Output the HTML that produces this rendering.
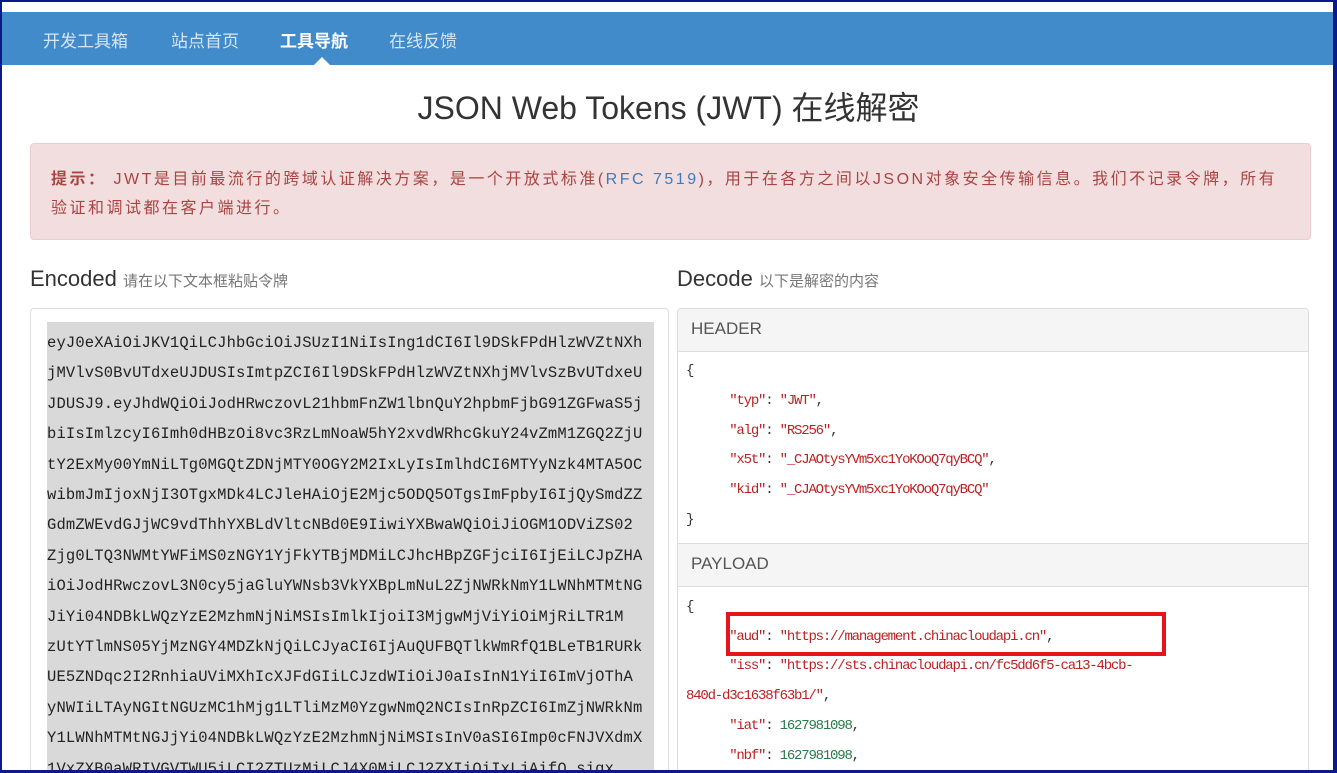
<!DOCTYPE html>
<html><head><meta charset="utf-8"><style>
*{margin:0;padding:0;box-sizing:border-box}
html,body{width:1337px;height:773px;overflow:hidden}
body{background:#fff;font-family:"Liberation Sans","Noto Sans CJK SC",sans-serif;position:relative}
.frame{position:absolute;left:0;top:0;width:1337px;height:773px;border:2px solid #0a1a8a;border-right-width:4px;border-bottom-width:3px;pointer-events:none;z-index:10}
.nav{position:absolute;left:2px;right:4px;top:12px;height:53px;background:#428bca}
.nav span{position:absolute;top:15px;font-size:17px;color:#d6e6f5}
.nav .act{color:#fff;font-weight:bold}
.caret{position:absolute;left:312px;top:45px;border:8px solid transparent;border-bottom-color:#fff;border-top:0}
h1{position:absolute;left:0;width:1337px;top:83px;text-align:center;font-weight:normal;font-size:32px;color:#333}
.alert{position:absolute;left:30px;top:143px;width:1281px;height:97px;background:#f2dede;border:1px solid #ebccd1;border-radius:4px;color:#a94442;font-size:16px;line-height:29px;padding:21px 20px;letter-spacing:2.5px;white-space:nowrap}
.alert a{color:#3a7cc1}
h3{position:absolute;top:266px;font-weight:normal;font-size:22px;color:#333}
h3 small{font-size:15px;color:#777}
.lp{position:absolute;left:30px;top:308px;width:639px;height:470px;border:1px solid #ddd;border-radius:4px}
.tok{position:absolute;left:47px;top:322px;width:607px;height:451px;background:#d9d9d9;font-family:"Liberation Mono",monospace;font-size:15.5px;color:#222;line-height:30.4px;padding-top:6px;white-space:pre;overflow:hidden;letter-spacing:0.15px}
.rp{position:absolute;left:677px;top:308px;width:632px;height:470px;border:1px solid #ddd;border-radius:4px;overflow:hidden}
.ph{height:43px;background:#f5f5f5;border-bottom:1px solid #ddd;font-size:17px;color:#555;padding:10px 13px}
.pb{font-family:"Liberation Mono",monospace;font-size:14px;letter-spacing:-1.2px;line-height:29.8px;color:#333;padding:5px 8px 7px;white-space:pre;border-bottom:1px solid #ddd}
.k{color:#b22}.n{color:#2a7a4a}
.box{position:absolute;left:726px;top:612px;width:440px;height:44px;border:4px solid #e8141c}
</style></head><body>
<div class="nav"><span style="left:41px">开发工具箱</span><span style="left:169px">站点首页</span><span class="act" style="left:278px">工具导航</span><span style="left:387px">在线反馈</span><div class="caret"></div></div>
<h1>JSON Web Tokens (JWT) 在线解密</h1>
<div class="alert"><b>提示：</b> JWT是目前最流行的跨域认证解决方案，是一个开放式标准(<a>RFC 7519</a>)，用于在各方之间以JSON对象安全传输信息。我们不记录令牌，所有<br>验证和调试都在客户端进行。</div>
<h3 style="left:30px">Encoded <small>请在以下文本框粘贴令牌</small></h3>
<h3 style="left:677px">Decode <small>以下是解密的内容</small></h3>
<div class="lp"></div>
<div class="tok">eyJ0eXAiOiJKV1QiLCJhbGciOiJSUzI1NiIsIng1dCI6Il9DSkFPdHlzWVZtNXh
jMVlvS0BvUTdxeUJDUSIsImtpZCI6Il9DSkFPdHlzWVZtNXhjMVlvSzBvUTdxeU
JDUSJ9.eyJhdWQiOiJodHRwczovL21hbmFnZW1lbnQuY2hpbmFjbG91ZGFwaS5j
biIsImlzcyI6Imh0dHBzOi8vc3RzLmNoaW5hY2xvdWRhcGkuY24vZmM1ZGQ2ZjU
tY2ExMy00YmNiLTg0MGQtZDNjMTY0OGY2M2IxLyIsImlhdCI6MTYyNzk4MTA5OC
wibmJmIjoxNjI3OTgxMDk4LCJleHAiOjE2Mjc5ODQ5OTgsImFpbyI6IjQySmdZZ
GdmZWEvdGJjWC9vdThhYXBLdVltcNBd0E9IiwiYXBwaWQiOiJiOGM1ODViZS02
Zjg0LTQ3NWMtYWFiMS0zNGY1YjFkYTBjMDMiLCJhcHBpZGFjciI6IjEiLCJpZHA
iOiJodHRwczovL3N0cy5jaGluYWNsb3VkYXBpLmNuL2ZjNWRkNmY1LWNhMTMtNG
JiYi04NDBkLWQzYzE2MzhmNjNiMSIsImlkIjoiI3MjgwMjViYiOiMjRiLTR1M
zUtYTlmNS05YjMzNGY4MDZkNjQiLCJyaCI6IjAuQUFBQTlkWmRfQ1BLeTB1RURk
UE5ZNDqc2I2RnhiaUViMXhIcXJFdGIiLCJzdWIiOiJ0aIsInN1YiI6ImVjOThA
yNWIiLTAyNGItNGUzMC1hMjg1LTliMzM0YzgwNmQ2NCIsInRpZCI6ImZjNWRkNm
Y1LWNhMTMtNGJjYi04NDBkLWQzYzE2MzhmNjNiMSIsInV0aSI6Imp0cFNJVXdmX
1VxZXB0aWRIVGVTWU5iLCI2ZTUzMiLCJ4X0MiLCJ2ZXIiOiIxLjAifQ.sigx</div>
<div class="rp">
<div class="ph">HEADER</div>
<div class="pb">{
      <span class="k">"typ"</span>: <span class="k">"JWT"</span>,
      <span class="k">"alg"</span>: <span class="k">"RS256"</span>,
      <span class="k">"x5t"</span>: <span class="k">"_CJAOtysYVm5xc1YoKOoQ7qyBCQ"</span>,
      <span class="k">"kid"</span>: <span class="k">"_CJAOtysYVm5xc1YoKOoQ7qyBCQ"</span>
}</div>
<div class="ph">PAYLOAD</div>
<div class="pb" style="border:0;padding-top:6px">{
      <span class="k">"aud"</span>: <span class="k">"https://management.chinacloudapi.cn"</span>,
      <span class="k">"iss"</span>: <span class="k">"https://sts.chinacloudapi.cn/fc5dd6f5-ca13-4bcb-</span>
<span class="k">840d-d3c1638f63b1/"</span>,
      <span class="k">"iat"</span>: <span class="n">1627981098</span>,
      <span class="k">"nbf"</span>: <span class="n">1627981098</span>,</div>
</div>
<div class="box"></div>
<div class="frame"></div>
</body></html>
